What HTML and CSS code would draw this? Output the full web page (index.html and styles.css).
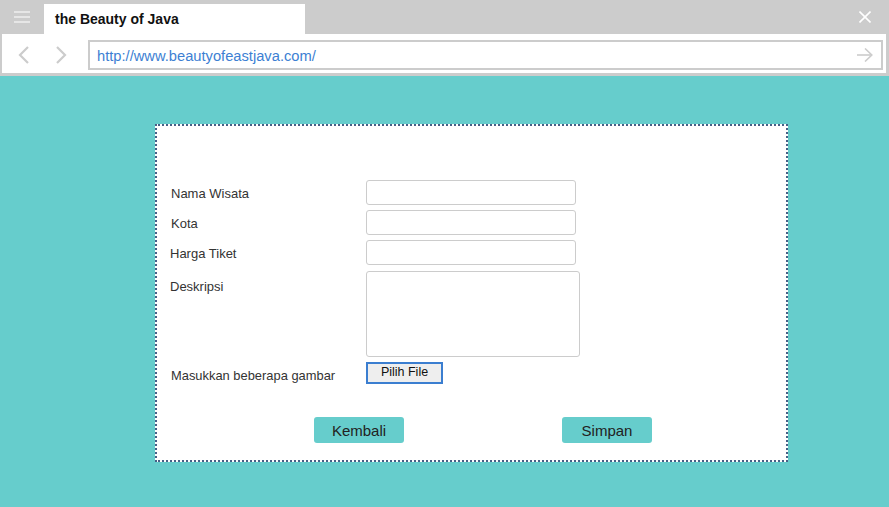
FILE: index.html
```html
<!DOCTYPE html>
<html>
<head>
<meta charset="utf-8">
<title>the Beauty of Java</title>
<link rel="stylesheet" href="styles.css">
</head>
<body>
<div class="chrome">
  <div class="tabbar">
    <div class="menu">
      <svg width="16" height="12" viewBox="0 0 16 12"><g stroke="#e6e6e6" stroke-width="2"><line x1="0" y1="1" x2="16" y2="1"/><line x1="0" y1="6" x2="16" y2="6"/><line x1="0" y1="11" x2="16" y2="11"/></g></svg>
    </div>
    <div class="tab">the Beauty of Java</div>
    <div class="spacer"></div>
    <div class="close">
      <svg width="12" height="12" viewBox="0 0 12 12"><g stroke="#ffffff" stroke-width="1.6"><line x1="0.5" y1="0.5" x2="11.5" y2="11.5"/><line x1="11.5" y1="0.5" x2="0.5" y2="11.5"/></g></svg>
    </div>
  </div>
  <div class="addrbar">
    <div class="nav">
      <svg width="12" height="18" viewBox="0 0 12 18"><polyline points="10,1 2,9 10,17" fill="none" stroke="#cccccc" stroke-width="2.2"/></svg>
      <svg width="12" height="18" viewBox="0 0 12 18"><polyline points="2,1 10,9 2,17" fill="none" stroke="#cccccc" stroke-width="2.2"/></svg>
    </div>
    <div class="url">
      <span class="urltext">http://www.beautyofeastjava.com/</span>
      <svg width="16" height="14" viewBox="0 0 16 14"><g fill="none" stroke="#cccccc" stroke-width="1.6"><line x1="0" y1="7" x2="15" y2="7"/><polyline points="8,0.5 14.8,7 8,13.5"/></g></svg>
    </div>
  </div>
</div>
<main class="page">
  <form class="card">
    <div class="fields">
      <label class="lbl">Nama Wisata</label>
      <input class="inp" type="text">
      <label class="lbl">Kota</label>
      <input class="inp" type="text">
      <label class="lbl lbl-shift">Harga Tiket</label>
      <input class="inp" type="text">
      <label class="lbl lbl-top">Deskripsi</label>
      <textarea class="txt"></textarea>
      <label class="lbl lbl-file">Masukkan beberapa gambar</label>
      <div><button type="button" class="filebtn">Pilih File</button></div>
    </div>
    <div class="actions">
      <button type="button" class="btn">Kembali</button>
      <button type="button" class="btn">Simpan</button>
    </div>
  </form>
</main>
</body>
</html>
```
FILE: styles.css
```css
html, body {
  margin: 0;
  padding: 0;
}
body {
  background: #66cdcc;
  font-family: "Liberation Sans", Arial, sans-serif;
  height: 507px;
  overflow: hidden;
}
.chrome {
  background: #cccccc;
  padding-bottom: 3px;
}
.tabbar {
  display: flex;
  height: 34px;
  align-items: flex-end;
}
.menu {
  width: 44px;
  height: 34px;
  display: flex;
  align-items: center;
  padding-left: 14px;
  box-sizing: border-box;
}
.tab {
  width: 261px;
  height: 30px;
  background: #ffffff;
  box-sizing: border-box;
  padding-left: 11px;
  display: flex;
  align-items: center;
  font-weight: bold;
  font-size: 14px;
  color: #111;
}
.spacer {
  flex: 1;
}
.close {
  height: 34px;
  width: 21px;
  display: flex;
  align-items: center;
  padding-right: 9px;
}
.addrbar {
  margin: 0 3px 0 2px;
  height: 39px;
  background: #ffffff;
  display: flex;
  align-items: flex-start;
}
.nav {
  display: flex;
  gap: 25px;
  padding: 12px 0 0 16px;
  width: 70px;
  box-sizing: border-box;
}
.url {
  margin-top: 6px;
  margin-left: 16px;
  flex: 1;
  height: 30px;
  border: 2px solid #cccccc;
  box-sizing: border-box;
  margin-right: 3px;
  display: flex;
  align-items: center;
  padding: 0 8px 0 7px;
}
.urltext {
  flex: 1;
  color: #3d7fd3;
  font-size: 14.7px;
  padding-top: 1px;
}
.page {
  padding: 48px 0 0 155px;
}
.card {
  width: 633px;
  height: 338px;
  box-sizing: border-box;
  border: 2px dotted #465f86;
  background: #ffffff;
  padding: 54px 0 0 14px;
}
.fields {
  display: grid;
  grid-template-columns: 195px auto;
  row-gap: 5px;
  align-items: center;
}
.lbl {
  font-size: 13px;
  color: #333333;
  padding-top: 2px;
}
.lbl-shift {
  margin-left: -1px;
}
.lbl-top {
  align-self: start;
  padding-top: 9px;
  margin-left: -1px;
}
.lbl-file {
  font-size: 12.9px;
  padding-top: 4px;
}
.inp {
  width: 210px;
  height: 25px;
  box-sizing: border-box;
  border: 1px solid #cccccc;
  border-radius: 3px;
  margin: 0;
  padding: 0 4px;
  font-family: inherit;
}
.txt {
  width: 214px;
  height: 86px;
  box-sizing: border-box;
  border: 1px solid #cccccc;
  border-radius: 3px;
  margin: 1px 0 0 0;
  resize: none;
  display: block;
  font-family: inherit;
}
.filebtn {
  width: 77px;
  height: 22px;
  box-sizing: border-box;
  border: 2px solid #3b7ed0;
  background: #eeeeee;
  font-family: inherit;
  font-size: 12.5px;
  color: #111;
  padding: 0 0 2px;
  margin: 0;
  display: block;
}
.actions {
  display: flex;
  gap: 158px;
  margin-top: 33px;
  padding-left: 143px;
}
.btn {
  width: 90px;
  height: 26px;
  background: #66cdcc;
  border: none;
  border-radius: 3px;
  font-family: inherit;
  font-size: 15px;
  color: #222222;
  padding: 0;
  margin: 0;
}
```
